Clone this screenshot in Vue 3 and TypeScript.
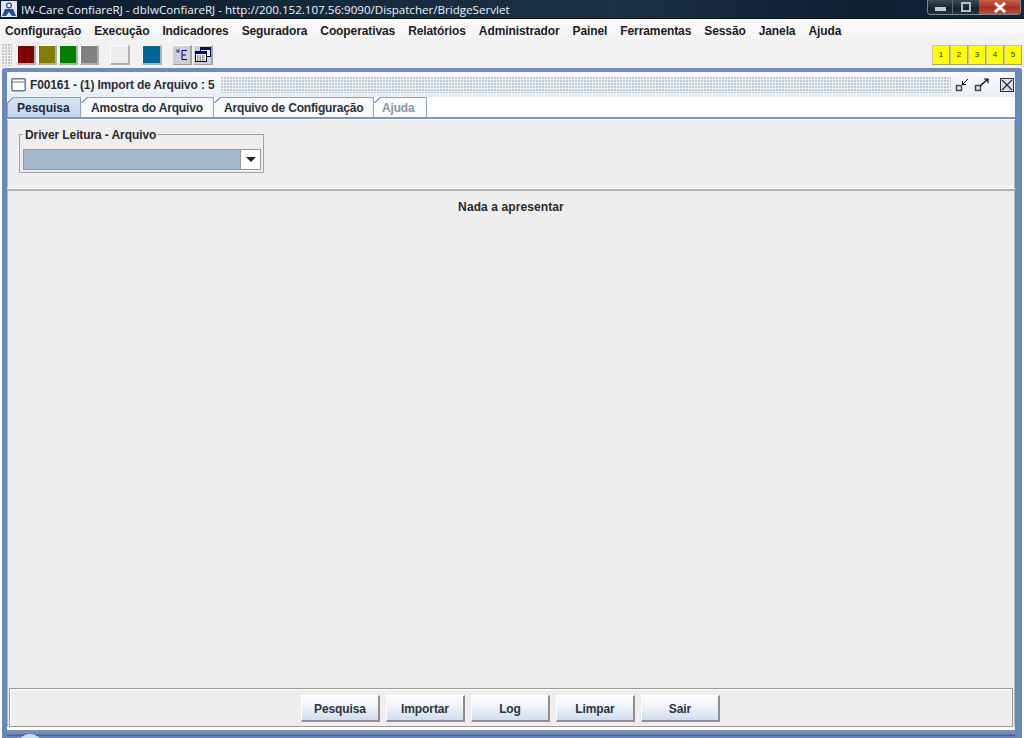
<script setup lang="ts">
const menus: string[] = ['Configuração', 'Execução', 'Indicadores', 'Seguradora', 'Cooperativas', 'Relatórios', 'Administrador', 'Painel', 'Ferramentas', 'Sessão', 'Janela', 'Ajuda']
const swatches: { color: string; cls: string }[] = [
  { color: '#800000', cls: '' },
  { color: '#808000', cls: '' },
  { color: '#008000', cls: '' },
  { color: '#808080', cls: '' },
  { color: '#eeeeee', cls: 'gap-a' },
  { color: '#006699', cls: 'gap-b' },
]
const desks: string[] = ['1', '2', '3', '4', '5']
const tabs: { label: string; cls: string }[] = [
  { label: 'Pesquisa', cls: 'active' },
  { label: 'Amostra do Arquivo', cls: 'w2' },
  { label: 'Arquivo de Configuração', cls: 'w3' },
  { label: 'Ajuda', cls: 'w4 disabled' },
]
const actions: string[] = ['Pesquisa', 'Importar', 'Log', 'Limpar', 'Sair']
</script>

<template>
  <div class="desktop">
    <header class="titlebar">
      <svg class="app-icon" width="16" height="16" viewBox="0 0 16 16">
        <rect x="0" y="0" width="16" height="16" fill="#dfe6f2" />
        <circle cx="8" cy="4.5" r="3" fill="#1f4f9c" />
        <path d="M1 15 L4 8 H12 L15 15 H11 L8 11 L5 15 Z" fill="#1f4f9c" />
        <rect x="6.5" y="3" width="3" height="3" fill="#fff" />
      </svg>
      <span class="title-text">IW-Care ConfiareRJ - dbIwConfiareRJ - http://200.152.107.56:9090/Dispatcher/BridgeServlet</span>
      <div class="win-controls">
        <span class="wc wc-min"><i></i></span>
        <span class="wc wc-max"><i></i></span>
        <span class="wc wc-close">
          <svg width="14" height="11" viewBox="0 0 14 11"><path d="M2 1 L12 10 M12 1 L2 10" stroke="#fff" stroke-width="3" /></svg>
        </span>
      </div>
    </header>

    <nav class="menubar">
      <span v-for="m in menus" :key="m" class="menu-item">{{ m }}</span>
    </nav>

    <div class="toolbar">
      <span class="grip"></span>
      <span v-for="s in swatches" :key="s.color" class="swatch" :class="s.cls" :style="{ background: s.color }"></span>
      <span class="tool-btn first">
        <svg width="14" height="14" viewBox="0 0 14 14">
          <path d="M7 2.5 H12 M7 2.5 V11.5 H12 M7 7 H11" fill="none" stroke="#000080" stroke-width="1" />
          <rect x="2" y="2" width="2" height="2" fill="none" stroke="#000080" stroke-width="0.7" />
        </svg>
      </span>
      <span class="tool-btn">
        <svg width="16" height="15" viewBox="0 0 16 15">
          <rect x="5.5" y="0.5" width="10" height="9" fill="#fff" stroke="#000080" />
          <rect x="5.5" y="0.5" width="10" height="2.5" fill="#000080" />
          <rect x="0.5" y="4.5" width="11" height="10" fill="#fff" stroke="#000" />
          <rect x="0.5" y="4.5" width="11" height="2.5" fill="#000080" />
          <path d="M2 9 H10 M2 11 H10 M2 13 H10" stroke="#222" stroke-dasharray="1.5 1" />
        </svg>
      </span>
      <div class="desks">
        <span v-for="d in desks" :key="d" class="desk">{{ d }}</span>
      </div>
    </div>

    <section class="frame">
      <div class="frame-title">
        <svg width="15" height="15" viewBox="0 0 15 15">
          <rect x="0.75" y="1.75" width="13.5" height="12" rx="1" fill="#fff" stroke="#6b7a94" stroke-width="1.5" />
          <path d="M1 5 H14" stroke="#6b7a94" />
        </svg>
        <span class="frame-name">F00161 - (1) Import de Arquivo : 5</span>
        <span class="dots"></span>
        <svg class="fi fi-a" width="15" height="14" viewBox="0 0 15 14">
          <rect x="1.5" y="7.5" width="5" height="5" fill="#dde" stroke="#445" stroke-width="1.4" />
          <path d="M13 1 L7.5 6.5 M7.5 3 V6.5 H11" fill="none" stroke="#000" />
        </svg>
        <svg class="fi fi-b" width="16" height="14" viewBox="0 0 16 14">
          <rect x="1.5" y="7.5" width="5" height="5" fill="#dde" stroke="#445" stroke-width="1.4" />
          <path d="M6 8 L14 1 M10 1 H14 V5" fill="none" stroke="#000" stroke-width="1.2" />
        </svg>
        <svg class="fi fi-c" width="14" height="14" viewBox="0 0 14 14">
          <rect x="0.5" y="0.5" width="13" height="13" fill="#d8e0ec" stroke="#333" />
          <path d="M2 2 L12 12 M12 2 L2 12" stroke="#222" stroke-width="1.1" />
        </svg>
      </div>

      <div class="tabs">
        <div v-for="t in tabs" :key="t.label" class="tab" :class="t.cls">{{ t.label }}</div>
      </div>

      <div class="body">
        <div class="filter">
          <div class="group">
            <span class="legend">Driver Leitura - Arquivo</span>
            <div class="combo">
              <div class="combo-value"></div>
              <div class="combo-arrow"><i></i></div>
            </div>
          </div>
        </div>
        <div class="results">
          <p class="empty">Nada a apresentar</p>
          <div class="actions">
            <button v-for="a in actions" :key="a" type="button" class="action">{{ a }}</button>
          </div>
        </div>
      </div>
      <div class="frame-bottom"></div>
    </section>
    <span class="orb"></span>
  </div>
</template>

<style>
html, body { margin: 0; padding: 0; overflow: hidden; }
</style>

<style scoped>
.desktop {
  position: relative;
  width: 1024px;
  height: 738px;
  overflow: hidden;
  display: flex;
  flex-direction: column;
  background: #fff;
  font-family: "Liberation Sans", Arial, sans-serif;
  font-size: 12px;
  font-weight: 700;
  color: #222;
}
.titlebar {
  height: 19px;
  flex: none;
  display: flex;
  align-items: center;
  background: linear-gradient(90deg, #0b1a2b 0%, #15293d 30%, #1b3143 60%, #0e1f30 85%, #13283a 100%);
  color: #fff;
  box-sizing: border-box;
  border-bottom: 1px solid #0a0f16;
}
.app-icon { margin-left: 1px; flex: none; }
.title-text {
  margin-left: 4px;
  font-family: "Open Sans", "Noto Sans", sans-serif;
  font-weight: 400;
  font-size: 11.6px;
  white-space: nowrap;
  color: #f0f2f5;
}
.win-controls {
  margin-left: auto;
  margin-right: 3px;
  align-self: flex-start;
  display: flex;
  height: 15px;
  border: 1px solid #7d8a96;
  border-top: 0;
  border-radius: 0 0 4px 4px;
  overflow: hidden;
  box-sizing: border-box;
}
.wc { display: flex; align-items: center; justify-content: center; height: 100%; }
.wc-min { width: 24px; background: linear-gradient(#3a4a58, #15222e 60%, #26343f); border-right: 1px solid #5c6a76; }
.wc-min i { display: block; width: 11px; height: 4px; background: #c8ccd0; margin-top: 4px; }
.wc-max { width: 26px; background: linear-gradient(#3a4a58, #15222e 60%, #26343f); }
.wc-max i { display: block; width: 6px; height: 6px; border: 2px solid #b8bdc2; }
.wc-close { width: 41px; background: linear-gradient(#c8604a, #a8321f 55%, #c2503a); }

.menubar {
  height: 22px;
  flex: none;
  box-sizing: border-box;
  display: flex;
  align-items: center;
  padding-left: 5px;
  padding-top: 1px;
  gap: 13px;
  background: linear-gradient(#fbfbfb, #f3f3f3);
  letter-spacing: -0.1px;
  color: #1c1c1c;
}
.menu-item { white-space: nowrap; }

.toolbar {
  height: 27px;
  flex: none;
  box-sizing: border-box;
  display: flex;
  align-items: center;
  padding: 0 2px 0 2px;
  background: #f1f1f1;
}
.grip {
  width: 10px;
  height: 22px;
  margin-right: 5px;
  background-image: radial-gradient(circle at 1px 1px, #c4c4c4 0.8px, transparent 1px);
  background-size: 3px 3px;
}
.swatch {
  width: 19px;
  height: 20px;
  margin-right: 2px;
  box-sizing: border-box;
  border-right: 2px solid #b0b0b0;
  border-bottom: 2px solid #b0b0b0;
  border-top: 1px solid #fff;
  border-left: 1px solid #fff;
}
.swatch.gap-a { margin-left: 9px; width: 20px; }
.swatch.gap-b { margin-left: 10px; width: 20px; }
.tool-btn {
  width: 19px;
  height: 20px;
  margin-right: 2px;
  display: flex;
  align-items: center;
  justify-content: center;
  background: #ccd0d8;
  box-sizing: border-box;
  border-right: 2px solid #a4a4a4;
  border-bottom: 1px solid #a4a4a4;
  border-top: 1px solid #fff;
}
.tool-btn.first { margin-left: 9px; }
.desks { margin-left: auto; display: flex; }
.desk {
  width: 18px;
  height: 20px;
  box-sizing: border-box;
  border: 1px solid #c4c4b0;
  border-right-color: #a0a090;
  border-bottom-color: #a0a090;
  background: #ffff00;
  color: #222;
  font-size: 8px;
  font-weight: 400;
  display: flex;
  align-items: center;
  justify-content: center;
}

.frame {
  flex: none;
  height: 670px;
  box-sizing: border-box;
  background: #fff;
  border-top: 4px solid #6d8bbe;
  border-left: 5px solid #6b88bc;
  border-right: 7px solid #6b88bc;
  margin: 0 2px 0 2px;
  display: flex;
  flex-direction: column;
  border-radius: 3px 3px 0 0;
}
.frame-title {
  height: 25px;
  flex: none;
  display: flex;
  align-items: center;
  padding-left: 4px;
  box-sizing: border-box;
  background: linear-gradient(#fbfcfe, #e8eef7);
  color: #2b2f36;
}
.frame-name { margin-left: 4px; white-space: nowrap; letter-spacing: -0.15px; }
.dots {
  flex: 1;
  height: 16px;
  margin: 0 0 0 6px;
  background-image: radial-gradient(circle at 1px 1px, #bcc7d8 0.8px, transparent 1px);
  background-size: 3px 3px;
}
.fi { flex: none; }
.fi-a { margin-left: 4px; }
.fi-b { margin-left: 4px; }
.fi-c { margin-left: 10px; margin-right: 1px; }

.tabs {
  height: 22px;
  flex: none;
  display: flex;
  align-items: flex-end;
  box-sizing: border-box;
  background: #fff;
  border-bottom: 2px solid #7f95bd;
}
.tab {
  position: relative;
  height: 20px;
  width: 74px;
  box-sizing: border-box;
  display: flex;
  align-items: center;
  padding-left: 10px;
  border: 1px solid #8da0bf;
  border-bottom: 0;
  border-left-width: 0;
  background: #f7f9fb;
  color: #2b3138;
  letter-spacing: -0.17px;
  white-space: nowrap;
}
.tab::before {
  content: "";
  position: absolute;
  left: 0;
  top: -1px;
  width: 6px;
  height: 6px;
  background: linear-gradient(135deg, #fff 46%, #8da0bf 46%, #8da0bf 60%, transparent 60%);
}
.tab.active {
  background: linear-gradient(#d6e5f4, #bfd6ee);
  border-left-width: 1px;
  padding-left: 9px;
  color: #1f2a38;
  letter-spacing: 0;
}
.tab.active::before { left: -1px; }
.tab.w2 { width: 133px; }
.tab.w3 { width: 160px; }
.tab.w4 { width: 53px; padding-left: 8px; }
.tab.disabled { color: #8b96a3; background: #fafbfc; }

.body {
  flex: 1;
  min-height: 0;
  display: flex;
  flex-direction: column;
  background: #fff;
  padding: 1px 0 3px 0;
}
.filter {
  height: 68px;
  flex: none;
  box-sizing: border-box;
  background: #eeeeee;
  margin: 0;
  padding: 14px 0 0 11px;
  border-left: 1px solid #b5b5b5;
  border-right: 1px solid #b5b5b5;
}
.group {
  position: relative;
  width: 245px;
  height: 39px;
  box-sizing: border-box;
  border: 1px solid #a3a3a3;
  padding: 14px 2px 0 3px;
}
.legend {
  position: absolute;
  left: 3px;
  top: -7px;
  padding: 0 2px 0 2px;
  background: #eeeeee;
  line-height: 14px;
  color: #2a2a2a;
  letter-spacing: -0.1px;
  white-space: nowrap;
}
.combo {
  display: flex;
  height: 21px;
  box-sizing: border-box;
  border: 1px solid #8d9aa8;
  background: #fff;
}
.combo-value { flex: 1; background: #a3b8cc; }
.combo-arrow {
  width: 19px;
  display: flex;
  align-items: center;
  justify-content: center;
  background: #fff;
  border-left: 1px solid #8d9aa8;
}
.combo-arrow i {
  display: block;
  width: 0;
  height: 0;
  border-left: 5.5px solid transparent;
  border-right: 5.5px solid transparent;
  border-top: 5px solid #222;
}
.results {
  flex: 1;
  min-height: 0;
  margin-top: 1px;
  box-sizing: border-box;
  display: flex;
  flex-direction: column;
  background: #eeeeee;
  border-top: 2px solid #b0b0b0;
  border-left: 1px solid #b5b5b5;
  border-right: 1px solid #b5b5b5;
}
.empty {
  margin: 9px 0 0 0;
  text-align: center;
  line-height: 14px;
  flex: 1;
  color: #2a2a2a;
  letter-spacing: 0.1px;
}
.actions {
  height: 39px;
  flex: none;
  margin: 0 1px 0 1px;
  box-sizing: border-box;
  display: flex;
  justify-content: center;
  align-items: flex-start;
  gap: 6px;
  padding: 6px 1px 0 0;
  border: 1px solid #9b9b94;
  box-shadow: inset 1px 1px 0 #fff;
}
.action {
  width: 79px;
  height: 27px;
  padding: 1px 0 0 0;
  box-sizing: border-box;
  border: 0;
  border-right: 2px solid #8f8f8f;
  border-bottom: 2px solid #8f8f8f;
  border-top: 1px solid #fff;
  border-left: 1px solid #fff;
  background: linear-gradient(#fbfcfd, #f3f6f9 35%, #cfdeec);
  font: inherit;
  color: #2a3440;
  letter-spacing: -0.1px;
}
.frame-bottom {
  height: 8px;
  flex: none;
  background: linear-gradient(#7f93b8 0, #6b88bc 50%, #3f5f94 70%, #6b88bc 85%);
}
.orb {
  position: absolute;
  left: 17px;
  top: 734px;
  width: 26px;
  height: 26px;
  border-radius: 50%;
  background: #c8dcf2;
}
</style>
